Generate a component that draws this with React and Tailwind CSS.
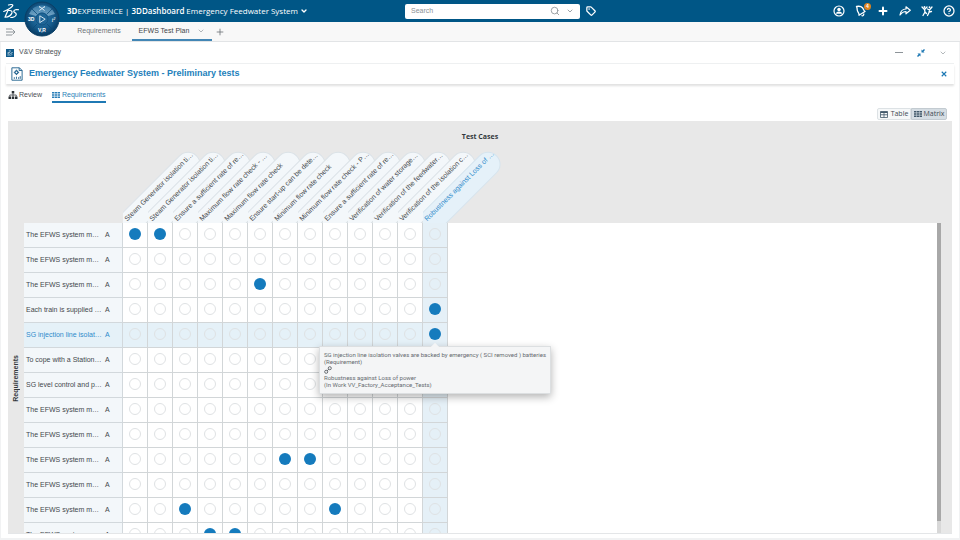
import clsx from 'clsx'
import { ChevronDown, Search, Tag, Plus, CircleHelp } from 'lucide-react'

const TEST_CASES = [
  'Steam Generator isolation ti…',
  'Steam Generator isolation ti…',
  'Ensure a sufficient rate of re…',
  'Maximum flow rate check - …',
  'Maximum flow rate check',
  'Ensure start-up can be dete…',
  'Minimum flow rate check',
  'Minimum flow rate check - P…',
  'Ensure a sufficient rate of re…',
  'Verification of water storage…',
  'Verification of the feedwater…',
  'Verification of the isolation c…',
  'Robustness against Loss of …',
]

const ROWS = [
  { label: 'The EFWS system m…', links: [0, 1] },
  { label: 'The EFWS system m…', links: [] },
  { label: 'The EFWS system m…', links: [5] },
  { label: 'Each train is supplied …', links: [12] },
  { label: 'SG injection line isolat…', links: [12] },
  { label: 'To cope with a Station…', links: [] },
  { label: 'SG level control and p…', links: [] },
  { label: 'The EFWS system m…', links: [] },
  { label: 'The EFWS system m…', links: [] },
  { label: 'The EFWS system m…', links: [6, 7] },
  { label: 'The EFWS system m…', links: [] },
  { label: 'The EFWS system m…', links: [2, 8] },
  { label: 'The EFWS system m…', links: [3, 4] },
]

const ACTIVE_ROW = 4
const ACTIVE_COL = 12

// ── Icons ─────────────────────────────────────────────────────
function Logo({ className }) {
  return (
    <svg viewBox="0 0 32 32" className={className} fill="none" stroke="currentColor" strokeWidth="2.400" strokeLinecap="round" strokeLinejoin="round">
      <path d="M11 4c4-1.500 9-1.500 8.500 1c-1 4-9 8-18 12" />
      <path d="M10 14.500L4 28.500c6-.5 12.500-4 14-9c.8-3.500-3-5-8-5" />
      <path d="M31 13.500c-4.500-1-9 0-9.500 3c-.4 2.500 5.500 3 5 6.500c-.5 3.500-6 6-11 6" />
    </svg>
  )
}

function Compass() {
  return (
    <svg viewBox="0 0 36 36" className="size-9">
      <defs>
        <radialGradient id="ball" cx="50%" cy="45%" r="55%">
          <stop offset="0%" stopColor="#2f76a8" />
          <stop offset="60%" stopColor="#175c8d" />
          <stop offset="100%" stopColor="#063a62" />
        </radialGradient>
        <linearGradient id="top" x1="0" y1="0" x2="0" y2="1">
          <stop offset="0%" stopColor="#3b80ae" />
          <stop offset="100%" stopColor="#93bbd6" />
        </linearGradient>
      </defs>
      <circle cx="18" cy="18" r="17" fill="url(#ball)" stroke="#0a3f66" />
      <path d="M5 13A14 14 0 0 1 31 13L24 15A7 7 0 0 0 12 15Z" fill="url(#top)" opacity="0.75" />
      <path d="M7 29L13 23M29 29L23 23M7 7L13 13M29 7L23 13" stroke="#0b4a78" strokeWidth="0.800" />
      <circle cx="18" cy="18" r="6" fill="#1f6596" stroke="#104f7e" strokeWidth="0.800" />
      <path d="M15.800 14.800v6.800l5.400-3.400z" fill="none" stroke="#e3eff7" strokeWidth="0.900" />
      <path d="M15.500 5.500l2.500 2l2.500-2M15.500 9.500l2.500-2l2.500 2M15.500 5.500v1M20.500 5.500v1" fill="none" stroke="#e3eff7" strokeWidth="1" />
      <text x="4" y="20" fill="#fff" fontSize="5" fontWeight="700" fontFamily="Liberation Sans, sans-serif">3D</text>
      <text x="14" y="31" fill="#fff" fontSize="5" fontWeight="700" fontFamily="Liberation Sans, sans-serif">V,R</text>
      <text x="27.500" y="20.500" fill="#fff" fontSize="6.500" fontStyle="italic" fontFamily="Liberation Serif, serif">i²</text>
    </svg>
  )
}

function UserIcon() {
  return (
    <svg viewBox="0 0 24 24" className="size-3" fill="none" stroke="currentColor" strokeWidth="2.400">
      <circle cx="12" cy="12" r="10" />
      <circle cx="12" cy="9" r="3.500" fill="currentColor" stroke="none" />
      <path d="M6 17.500c0-6 12-6 12 0z" fill="currentColor" stroke="none" />
    </svg>
  )
}

function BellIcon() {
  return (
    <svg viewBox="0 0 24 24" className="size-3" fill="none" stroke="currentColor" strokeWidth="2.600" strokeLinejoin="round">
      <path d="M3 3c5-1 9-1 12 2.500c2 2.500 2 5 5 7.500L8 20.500c1-4.500-3-6-3.500-10.500C4 7 4.500 5 3 3z" />
      <path d="M13 21c2.500 1.500 5 0 4.500-4" />
    </svg>
  )
}

function ShareIcon() {
  return (
    <svg viewBox="0 0 24 24" className="size-3" fill="none" stroke="currentColor" strokeWidth="2.400" strokeLinejoin="round">
      <path d="M14 3.500l8.500 7l-8.500 7V13c-5 0-8.500 2-12 7C3 13 7 8 14 8z" />
    </svg>
  )
}

function CommunityIcon() {
  return (
    <svg viewBox="0 0 24 24" className="size-3" fill="none" stroke="currentColor" strokeWidth="2.600" strokeLinecap="round">
      <path d="M2 4l5 5l5-5M7 9l1 5l-4 7M8 14l3 3" />
      <path d="M13 8l4 2l5-6M17 10l-1 5l-3 6M16 14l5-1" />
      <circle cx="7" cy="4" r="1.800" fill="currentColor" stroke="none" />
      <circle cx="17" cy="4.500" r="1.800" fill="currentColor" stroke="none" />
    </svg>
  )
}

function MenuIcon() {
  return (
    <svg viewBox="0 0 10 8" className="h-2 w-2.5" fill="none" stroke="#8d9499" strokeWidth="1">
      <path d="M0 1h6M0 4h9M0 7h6M6.500 1.500L9 4L6.500 6.500" />
    </svg>
  )
}

function PlanIcon() {
  return (
    <svg viewBox="0 0 22 26" className="h-3.5 w-3 shrink-0" fill="none" stroke="#1d5f8c" strokeWidth="1.700">
      <path d="M1.500 1.500h14l5 5v18h-19z" />
      <path d="M15 1.500v5h5.500" />
      <circle cx="10" cy="10" r="2.800" strokeWidth="2.200" />
      <path d="M10 5v2M10 13v2M5 10h2M13 10h2" />
      <path d="M6 22v-3M10 22v-4M14 22v-3M17 22v-5" />
    </svg>
  )
}

function TreeIcon() {
  return (
    <svg viewBox="0 0 18 16" className="h-2 w-2.5" fill="#2c3135">
      <path d="M6.500 0h5v5h-5zM0 11h5v5H0zM6.500 11h5v5h-5zM13 11h5v5h-5z" />
      <path d="M9 5v6M2.500 11V8h13v3" fill="none" stroke="#2c3135" strokeWidth="1.500" />
    </svg>
  )
}

function MatrixIcon({ className }) {
  return (
    <svg viewBox="0 0 16 12" className={className} fill="currentColor">
      <path d="M0 0h4v3H0zM5 0h5v3H5zM11 0h5v3h-5zM0 4.500h4v3H0zM5 4.500h5v3H5zM11 4.500h5v3h-5zM0 9h4v3H0zM5 9h5v3H5zM11 9h5v3h-5z" />
    </svg>
  )
}

function TableIcon() {
  return (
    <svg viewBox="0 0 16 14" className="h-[7px] w-2" fill="none" stroke="#41586a" strokeWidth="1.600">
      <path d="M1 1h14v12H1zM1 7.500h14M8 3v10" />
      <path d="M1 2.500h14" strokeWidth="3" />
    </svg>
  )
}

function CollapseIcon() {
  return (
    <svg viewBox="0 0 16 16" className="size-2" fill="#1a77b3">
      <path d="M9 1v6h6l-2-2l3-3l-2-2l-3 3zM7 15V9H1l2 2l-3 3l2 2l3-3z" />
    </svg>
  )
}

function LinkIcon() {
  return (
    <svg viewBox="0 0 18 18" className="size-2" fill="none" stroke="#666b70" strokeWidth="2.200">
      <circle cx="5" cy="13" r="3.500" />
      <circle cx="13" cy="5" r="3.500" />
      <path d="M6.500 11.500l5-5" />
    </svg>
  )
}

// ── Bars ──────────────────────────────────────────────────────
function TopBar() {
  return (
    <header className="relative flex h-[22px] shrink-0 items-center bg-[#005686] text-white">
      <div className="flex w-[405px] shrink-0 items-center">
        <Logo className="ml-[3px] h-4 w-4" />
        <a href="#compass" aria-label="Compass" className="absolute top-px left-6 z-10">
          <Compass />
        </a>
        <h1 className="ml-12 font-['Open_Sans',sans-serif] text-[8px] leading-4 whitespace-nowrap">
          <b className="font-bold">3D</b>EXPERIENCE | <b className="font-semibold">3DDashboard</b>
        </h1>
        <button className="ml-0.5 flex items-center gap-0.5 font-['Open_Sans',sans-serif] text-[8px] leading-4 whitespace-nowrap">
          Emergency Feedwater System
          <ChevronDown className="size-2" strokeWidth={4} />
        </button>
      </div>
      <div className="flex h-[15px] w-[175px] items-center gap-1.5 rounded-xs bg-white pr-1.5 pl-1.5 text-[#8a9196]">
        <input aria-label="Search" placeholder="Search" className="min-w-0 flex-1 text-[7px] outline-none placeholder:text-[#8a9196]" />
        <button aria-label="Run search"><Search className="size-2.5" strokeWidth={2} /></button>
        <button aria-label="Search options"><ChevronDown className="size-2" strokeWidth={2.5} /></button>
      </div>
      <button aria-label="Tags" className="ml-1.5"><Tag className="size-2.5" strokeWidth={3} /></button>
      <nav className="mr-[5px] ml-auto flex items-center gap-2.5">
        <button aria-label="Profile"><UserIcon /></button>
        <button aria-label="Notifications" className="relative">
          <BellIcon />
          <span className="absolute -top-0.5 -right-1 size-[7px] rounded-full bg-[#dd8420] text-center text-[5px] leading-[7px] font-bold">4</span>
        </button>
        <button aria-label="Add"><Plus className="size-3" strokeWidth={4} /></button>
        <button aria-label="Share"><ShareIcon /></button>
        <button aria-label="Communities"><CommunityIcon /></button>
        <button aria-label="Help"><CircleHelp className="size-3" strokeWidth={2.5} /></button>
      </nav>
    </header>
  )
}

function DashboardTabs() {
  return (
    <nav className="flex h-5 shrink-0 items-stretch border-b border-[#e2e4e6] bg-[#f8f8f8] text-[7px] text-[#6f7579]">
      <button aria-label="Menu" className="ml-1.5 flex w-[60px] items-center"><MenuIcon /></button>
      <button className="w-[66px]">Requirements</button>
      <button className="flex w-20 items-center justify-center gap-2 border-b-2 border-[#4286b5] pt-px text-[#3f454a]">
        EFWS Test Plan
        <ChevronDown className="size-2 text-[#8d9499]" />
      </button>
      <button aria-label="Add tab" className="ml-[3px] flex items-center"><Plus className="size-2.5" strokeWidth={2} /></button>
    </nav>
  )
}

function WidgetHeader() {
  return (
    <>
      <div className="mx-[5px] flex h-[22px] shrink-0 items-center gap-[5px] border-b border-[#eef0f1] text-[7px] text-[#4b5054]">
        <span className="flex size-2 items-center justify-center bg-[#0f5a8a] text-white"><Logo className="size-1.5" /></span>
        V&amp;V Strategy
        <div className="mr-[7px] ml-auto flex items-center gap-3.5 text-[#8d9499]">
          <button aria-label="Minimize" className="h-px w-2 bg-[#8d9499]" />
          <button aria-label="Restore"><CollapseIcon /></button>
          <button aria-label="Options"><ChevronDown className="size-2" /></button>
        </div>
      </div>
      <div className="mx-[5px] flex h-5 shrink-0 items-center gap-1.5 pl-[5px] shadow-[0_2px_2px_rgba(0,0,0,0.12)]">
        <PlanIcon />
        <h2 className="text-[9px] font-bold text-[#2380bb]">Emergency Feedwater System - Preliminary tests</h2>
        <button aria-label="Close" className="mr-[7px] ml-auto text-[#1a77b3]">
          <svg viewBox="0 0 8 8" className="size-1.5" stroke="currentColor" strokeWidth="1.500"><path d="M1 1l6 6M7 1L1 7" /></svg>
        </button>
      </div>
    </>
  )
}

function ViewTabs() {
  return (
    <div className="mx-[7px] flex shrink-0 pt-1.5 text-[7px] text-[#4b5054]">
      <button className="flex h-3 items-center gap-px pb-0.5"><TreeIcon />Review</button>
      <button className="ml-2.5 flex h-[13px] items-center gap-0.5 border-b-2 border-[#1f79b4] pb-px text-[#2b7fb8]">
        <MatrixIcon className="h-1.5 w-2" />Requirements
      </button>
    </div>
  )
}

function ViewToggle() {
  return (
    <div className="mx-3 mt-[5px] mb-px flex shrink-0 justify-end font-['Open_Sans',sans-serif] text-[7px] text-[#3f4a52]">
      <button className="flex h-3 w-[34px] items-center justify-center gap-[3px] rounded-l-xs border border-[#dde2e5] bg-[#f6f8f9]"><TableIcon />Table</button>
      <button className="flex h-3 w-9 items-center justify-center gap-0.5 rounded-r-xs border border-[#c3cbd1] bg-[#d5dde3]">
        <MatrixIcon className="h-1.5 w-2 text-[#41586a]" />Matrix
      </button>
    </div>
  )
}

// ── Matrix ────────────────────────────────────────────────────
function Tooltip() {
  return (
    <div role="tooltip" className="absolute top-[23px] left-1/2 z-20 -translate-x-1/2 border border-[#dcdfe1] bg-[#f4f5f6] px-1 pt-1 pb-[5px] text-left font-['Roboto',sans-serif] text-[6px] leading-[7px] whitespace-nowrap text-[#666b70] shadow-[0_3px_8px_rgba(0,0,0,0.3)]">
      <span className="absolute -top-[3px] left-1/2 size-1.5 -translate-x-1/2 rotate-45 bg-[#f4f5f6]" />
      <p>SG injection line isolation valves are backed by emergency ( SCI removed ) batteries</p>
      <p>(Requirement)</p>
      <div className="flex h-[9px] items-center"><LinkIcon /></div>
      <p>Robustness against Loss of power</p>
      <p>(In Work VV_Factory_Acceptance_Tests)</p>
    </div>
  )
}

// slanted tab, cut off at the left and bottom edges of its own cell
function ColumnHead({ label, active }) {
  return (
    <th scope="col" className="relative h-[72px] p-0 font-normal [clip-path:inset(-4px_-80px_0_0)]">
      <div
        className={clsx(
          'absolute -bottom-6 left-0 flex h-[25px] w-[117px] origin-bottom-left -rotate-45 items-start rounded-r-full border pt-[3px] pl-5 text-[7px] leading-[8px] whitespace-nowrap',
          active ? 'border-[#d6e4ee] bg-[#e5f1f9] text-[#2e8bcb]' : 'border-[#dbe2e7] bg-[#f3f7fa] text-[#43484c]',
        )}
      >
        {label}
      </div>
    </th>
  )
}

function Matrix() {
  return (
    <section className="mx-[7px] mb-1 flex min-h-0 flex-1 flex-col border-b border-[#e4e6e8] bg-[#e8e8e8]">
      <h3 className="h-[30px] shrink-0 text-center font-['Open_Sans',sans-serif] text-[7px] leading-[32px] font-bold text-[#33383c]">Test Cases</h3>
      <div className="flex min-h-0 flex-1">
        <div className="flex w-4 shrink-0 items-center justify-center pt-[72px]">
          <h3 className="rotate-180 text-[7px] leading-4 font-bold text-[#33383c] [writing-mode:vertical-rl]">Requirements</h3>
        </div>
        <div className="min-w-0 flex-1 [clip-path:inset(-4px_0_0_0)]">
          <table className="w-full table-fixed border-separate border-spacing-0 text-[7px]">
            <colgroup>
              <col className="w-[99px]" />
              {TEST_CASES.map((_, i) => <col key={i} className="w-[25px]" />)}
              <col />
            </colgroup>
            <thead>
              <tr>
                <td />
                {TEST_CASES.map((label, i) => (
                  <ColumnHead key={i} label={label} active={i === ACTIVE_COL} />
                ))}
                <td />
              </tr>
            </thead>
            <tbody>
              {ROWS.map((row, r) => (
                <tr key={r} className={r === ACTIVE_ROW ? 'bg-[#e5f1f8]' : 'bg-white'}>
                  <th
                    scope="row"
                    className={clsx(
                      'h-[25px] border-r border-b border-[#d2d8dc] p-0 pt-px pl-0.5 text-left font-normal',
                      r === ACTIVE_ROW ? 'text-[#2e8bcb]' : 'bg-[#f3f7fa] text-[#43484c]',
                    )}
                  >
                    <div className="flex">
                      <span className="w-[79px] whitespace-nowrap">{row.label}</span>
                      <span>A</span>
                    </div>
                  </th>
                  {TEST_CASES.map((name, c) => (
                    <td
                      key={c}
                      className={clsx(
                        'relative h-[25px] border-r border-b border-[#d2d6d8] p-0 pb-0.5',
                        c === ACTIVE_COL && 'bg-[#e5f0f7]',
                      )}
                    >
                      <button
                        aria-label={`${row.label} / ${name}`}
                        className={clsx(
                          'mx-auto block rounded-full',
                          row.links.includes(c) ? 'size-3 bg-[#157bbd]' : 'size-3 border border-[#dfe2e4]',
                        )}
                      />
                      {r === ACTIVE_ROW && c === ACTIVE_COL && <Tooltip />}
                    </td>
                  ))}
                  <td className="bg-white" />
                </tr>
              ))}
            </tbody>
          </table>
        </div>
        <div className="mt-[72px] mr-[11px] w-1 shrink-0 bg-[#d8d8d8]">
          <div className="h-[96%] bg-[#a8a8a8]" />
        </div>
      </div>
    </section>
  )
}

export default function App() {
  return (
    <div className="flex h-screen flex-col overflow-hidden bg-[#f1f2f3] font-['Liberation_Sans',Arial,sans-serif]">
      <TopBar />
      <DashboardTabs />
      <main className="mx-px mb-0.5 flex min-h-0 flex-1 flex-col bg-white">
        <WidgetHeader />
        <ViewTabs />
        <ViewToggle />
        <Matrix />
      </main>
    </div>
  )
}
